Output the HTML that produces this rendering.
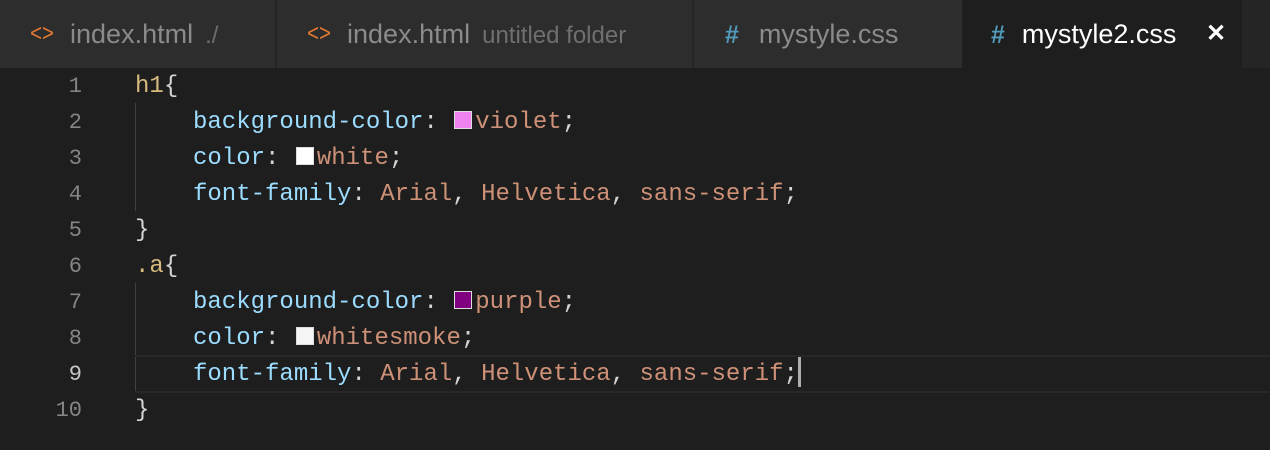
<html><head><style>
body{margin:0;width:1270px;height:450px;background:#1e1e1e;overflow:hidden;position:relative}
.bar{position:absolute;top:0;left:0;width:1270px;height:68px;background:#252526}
.tab{position:absolute;top:0;height:68px;background:#2d2d2d;font-family:"Liberation Sans",sans-serif;font-size:27px;color:#8b8b8b;line-height:68px;white-space:nowrap}
.tab .d{font-size:24px;color:#6f6f6f;margin-left:12px}
.ic{color:#e37933;font-size:24px;margin-right:14px;display:inline-block;transform:scaleX(0.85);vertical-align:2px}
.hs{color:#519aba;font-weight:bold;margin-right:20px;font-size:25px}
.code{position:absolute;top:69px;left:0;font-family:"Liberation Mono",monospace;font-size:24px}
.ln{position:absolute;height:36px;line-height:36px;white-space:pre;color:#d4d4d4}
.n{position:absolute;left:0;width:82px;text-align:right;height:36px;line-height:36px;color:#858585;font-family:"Liberation Mono",monospace;font-size:22px}
.s{color:#d7ba7d}.p{color:#9cdcfe}.v{color:#ce9178}
.sw{display:inline-block;width:16px;height:16px;border:1px solid #ddd;margin:0 3px 0 2px;vertical-align:-1px}
.g{position:absolute;left:135px;width:1px;background:#404040}
</style></head><body>
<div class="bar"></div>
<div class="tab" style="left:0;width:275px;padding-left:28px;box-sizing:border-box"><span class="ic">&lt;&gt;</span>index.html<span class="d">./</span></div>
<div class="tab" style="left:277px;width:415px;padding-left:28px;box-sizing:border-box"><span class="ic">&lt;&gt;</span>index.html<span class="d">untitled folder</span></div>
<div class="tab" style="left:694px;width:268px;padding-left:31px;box-sizing:border-box"><span class="hs">#</span>mystyle.css</div>
<div class="tab" style="left:962px;width:280px;padding-left:29px;box-sizing:border-box;background:#1e1e1e;color:#fff"><span class="hs" style="margin-right:17px">#</span>mystyle2.css<span style="position:absolute;left:244px;font-weight:bold;font-size:24px">✕</span></div>
<div class="code">
<div class="g" style="top:34px;height:108px"></div>
<div class="g" style="top:214px;height:108px"></div>
<div style="position:absolute;left:135px;top:286px;width:1135px;height:34px;border-top:2px solid #282828;border-bottom:2px solid #282828"></div>
<div class="n" style="top:0">1</div><div class="n" style="top:36px">2</div><div class="n" style="top:72px">3</div><div class="n" style="top:108px">4</div><div class="n" style="top:144px">5</div><div class="n" style="top:180px">6</div><div class="n" style="top:216px">7</div><div class="n" style="top:252px">8</div><div class="n" style="top:288px;color:#c6c6c6">9</div><div class="n" style="top:324px">10</div>
<div class="ln" style="top:0;left:135px"><span class="s">h1</span>{</div>
<div class="ln" style="top:36px;left:193px"><span class="p">background-color</span>: <span class="sw" style="background:violet"></span><span class="v">violet</span>;</div>
<div class="ln" style="top:72px;left:193px"><span class="p">color</span>: <span class="sw" style="background:#fff"></span><span class="v">white</span>;</div>
<div class="ln" style="top:108px;left:193px"><span class="p">font-family</span>: <span class="v">Arial</span>, <span class="v">Helvetica</span>, <span class="v">sans-serif</span>;</div>
<div class="ln" style="top:144px;left:135px">}</div>
<div class="ln" style="top:180px;left:135px"><span class="s">.a</span>{</div>
<div class="ln" style="top:216px;left:193px"><span class="p">background-color</span>: <span class="sw" style="background:purple"></span><span class="v">purple</span>;</div>
<div class="ln" style="top:252px;left:193px"><span class="p">color</span>: <span class="sw" style="background:#f5f5f5"></span><span class="v">whitesmoke</span>;</div>
<div class="ln" style="top:288px;left:193px"><span class="p">font-family</span>: <span class="v">Arial</span>, <span class="v">Helvetica</span>, <span class="v">sans-serif</span>;<span style="display:inline-block;width:3px;height:30px;background:#aeafad;vertical-align:-7px"></span></div>
<div class="ln" style="top:324px;left:135px">}</div>
</div>
</body></html>
